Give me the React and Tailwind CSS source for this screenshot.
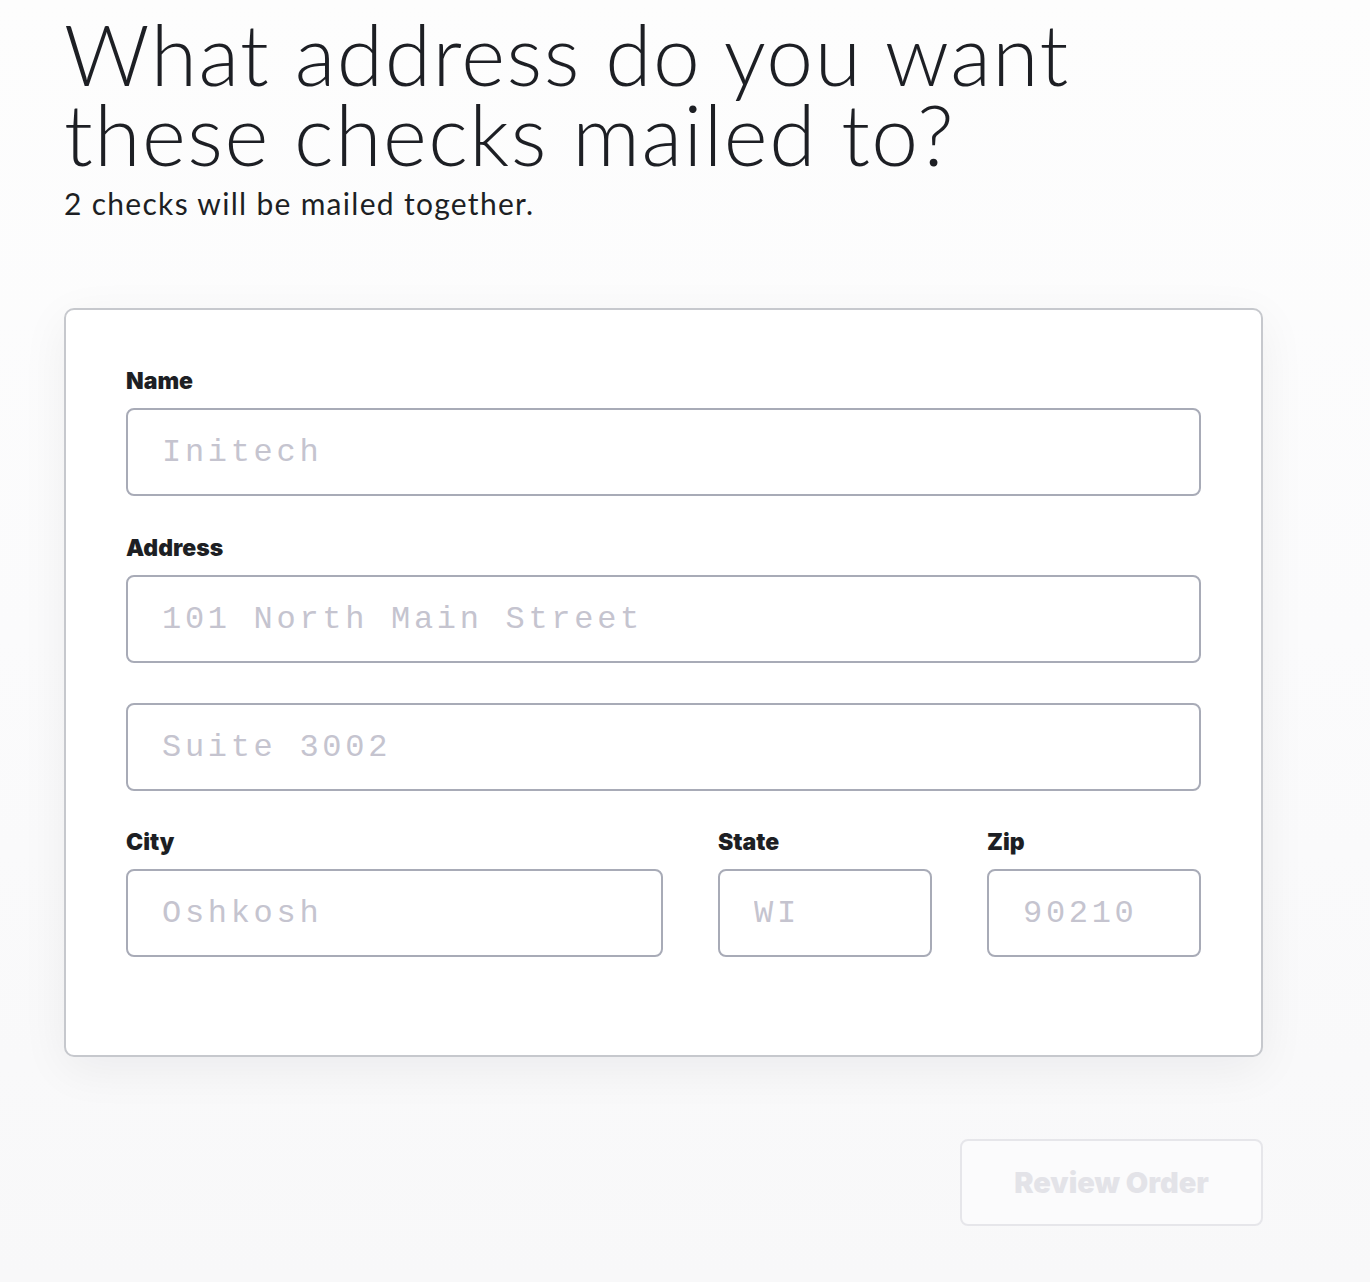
import React from "react";

function Field({ label, placeholder, className = "" }) {
  return (
    <div className={className}>
      {label && (
        <label className="block text-[23px] leading-[26px] font-black text-[#1d1f24] mb-[14px] font-['Inter',sans-serif]">
          {label}
        </label>
      )}
      <input
        type="text"
        placeholder={placeholder}
        className="w-full h-[88px] px-[34px] border-2 border-[#a8abb7] rounded-[8px] bg-white text-[32px] tracking-[3.7px] font-['Liberation_Mono',monospace] placeholder:text-[#c5c4cf] outline-none"
      />
    </div>
  );
}

export default function App() {
  return (
    <div className="min-h-[1282px] bg-gradient-to-b from-[#fdfdfd] via-[#fbfbfc] to-[#f8f8f9] font-['Lato',sans-serif] text-[#1d1f24]">
      <div className="pl-[64px] pt-[14px] w-[1263px]">
        <h1 className="text-[84px] leading-[80px] font-light tracking-[1.5px]">
          What address do you want
          <br />
          these checks mailed to?
        </h1>
        <p className="text-[30px] leading-[36px] mt-[11px] tracking-[1.3px]">
          2 checks will be mailed together.
        </p>

        <div className="mt-[87px] bg-white border-2 border-[#c6c8cd] rounded-[10px] shadow-[0_12px_48px_rgba(20,20,40,0.06)] px-[60px] pt-[58px] pb-[98px]">
          <Field label="Name" placeholder="Initech" />
          <Field label="Address" placeholder="101 North Main Street" className="mt-[39px]" />
          <Field placeholder="Suite 3002" className="mt-[40px]" />
          <div className="mt-[38px] grid grid-cols-[537fr_214fr_214fr] gap-[55px]">
            <Field label="City" placeholder="Oshkosh" />
            <Field label="State" placeholder="WI" />
            <Field label="Zip" placeholder="90210" />
          </div>
        </div>

        <div className="flex justify-end mt-[82px]">
          <button
            disabled
            className="w-[303px] h-[87px] border-2 border-[#e6e6ea] rounded-[8px] text-[29px] font-black text-[#e3e3e8] font-['Inter',sans-serif] bg-[#fbfbfc]"
          >
            Review Order
          </button>
        </div>
      </div>
    </div>
  );
}
